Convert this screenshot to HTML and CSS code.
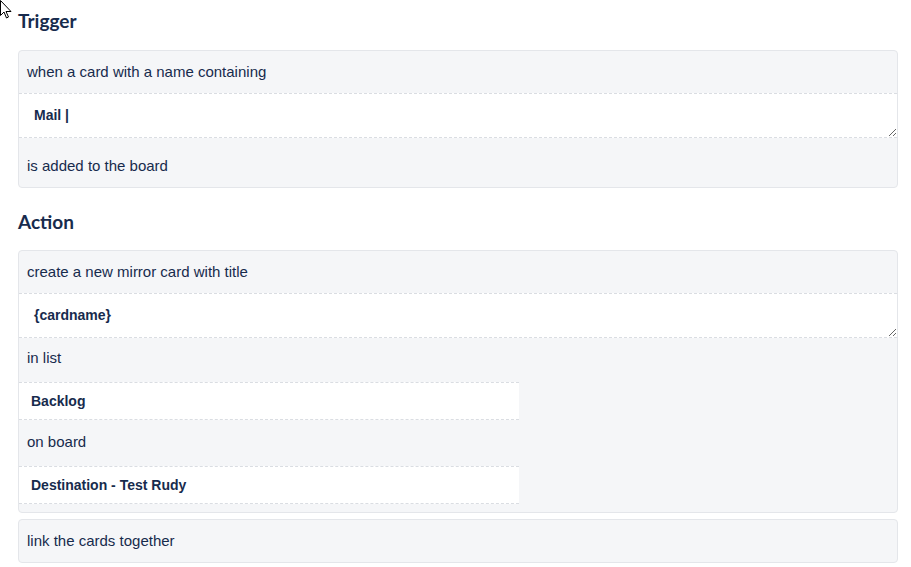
FILE: index.html
```html
<!DOCTYPE html>
<html>
<head>
<meta charset="utf-8">
<link rel="stylesheet" href="styles.css">
</head>
<body>
<svg class="cursor" width="13" height="20" viewBox="0 0 13 20"><path d="M0.5 0.5 L0.5 15.5 L4 12 L6.5 18 L8.5 17 L6 11.5 L11 11.5 Z" fill="#fff" stroke="#000" stroke-width="1" stroke-linejoin="miter"/></svg>
<main class="page">
  <h2 class="section-title">Trigger</h2>
  <div class="card">
    <div class="row">when a card with a name containing</div>
    <textarea class="field">Mail |</textarea>
    <div class="row row-after-field">is added to the board</div>
  </div>

  <h2 class="section-title action-title">Action</h2>
  <div class="card card-action">
    <div class="row">create a new mirror card with title</div>
    <textarea class="field">{cardname}</textarea>
    <div class="row row-in-list">in list</div>
    <div class="select">Backlog</div>
    <div class="row row-on-board">on board</div>
    <div class="select">Destination - Test Rudy</div>
  </div>
  <div class="card card-link">
    <div class="row">link the cards together</div>
  </div>
</main>
</body>
</html>
```

FILE: styles.css
```css
html, body {
  margin: 0;
  padding: 0;
  background: #ffffff;
}

body {
  font-family: "Liberation Sans", Arial, sans-serif;
  font-size: 15px;
  color: #172b4d;
}

.cursor {
  position: absolute;
  left: 0;
  top: 0;
}

.page {
  padding: 0 13px 0 18px;
}

.section-title {
  font-family: Lato, "Liberation Sans", sans-serif;
  font-weight: 700;
  font-size: 19px;
  line-height: 24px;
  color: #172b4d;
  margin: 0;
  padding-top: 9px;
  padding-bottom: 17px;
}

.action-title {
  padding-top: 22px;
  padding-bottom: 16px;
}

.card {
  background: #f5f6f8;
  border: 1px solid #e4e6ea;
  border-radius: 4px;
}

.row {
  padding: 12px 8px;
  line-height: 18px;
}

.row-after-field {
  padding-top: 19px;
  padding-bottom: 12px;
}

.field {
  display: block;
  box-sizing: border-box;
  width: 100%;
  height: 45px;
  margin: 0;
  padding: 12px 15px 12px;
  border: none;
  border-top: 1px dashed #dadde2;
  border-bottom: 1px dashed #dadde2;
  background: #ffffff;
  font-family: "Liberation Sans", Arial, sans-serif;
  font-size: 14px;
  font-weight: 700;
  line-height: 18px;
  color: #172b4d;
  outline: none;
  overflow: hidden;
}

.row-in-list {
  padding-top: 11px;
  padding-bottom: 15px;
}

.row-on-board {
  padding-top: 13px;
  padding-bottom: 15px;
}

.select {
  box-sizing: border-box;
  width: 500px;
  height: 38px;
  padding: 9px 12px;
  line-height: 18px;
  background: #ffffff;
  border-top: 1px dashed #dadde2;
  border-bottom: 1px dashed #dadde2;
  font-size: 14px;
  font-weight: 700;
}

.card-action {
  padding-bottom: 8px;
}

.card-link {
  margin-top: 6px;
}
```
